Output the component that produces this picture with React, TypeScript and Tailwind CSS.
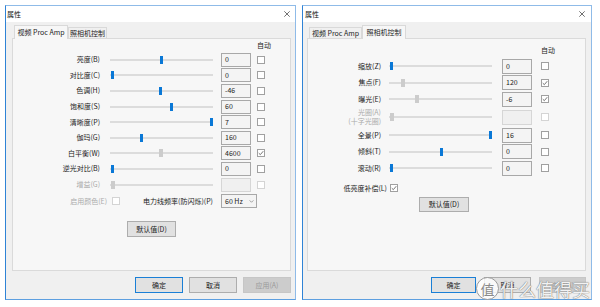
import React from "react";

type Row = {
  label: string;
  sub?: string;
  pos: number;
  value: string;
  auto?: boolean;
  grayThumb?: boolean;
  disabled?: boolean;
  h?: string;
};

const videoRows: Row[] = [
  { label: "亮度(B)", pos: 51, value: "0" },
  { label: "对比度(C)", pos: 2, value: "0" },
  { label: "色调(H)", pos: 50, value: "-46" },
  { label: "饱和度(S)", pos: 61, value: "60" },
  { label: "清晰度(P)", pos: 101, value: "7" },
  { label: "伽玛(G)", pos: 31, value: "160" },
  { label: "白平衡(W)", pos: 50, value: "4600", auto: true, grayThumb: true },
  { label: "逆光对比(B)", pos: 2, value: "0" },
  { label: "增益(G)", pos: 2, value: "", grayThumb: true, disabled: true },
];

const cameraRows: Row[] = [
  { label: "缩放(Z)", pos: 2, value: "0" },
  { label: "焦点(F)", pos: 13, value: "120", auto: true, grayThumb: true },
  { label: "曝光(E)", pos: 27, value: "-6", auto: true, grayThumb: true },
  { label: "光圈(A)", sub: "(十字光圈)", pos: 2, value: "", grayThumb: true, disabled: true },
  { label: "全景(P)", pos: 101, value: "16" },
  { label: "倾斜(T)", pos: 52, value: "0" },
  { label: "滚动(R)", pos: 2, value: "0" },
];

function Slider({ pos, gray }: { pos: number; gray?: boolean }) {
  return (
    <div className="relative w-[103px] h-full flex items-center shrink-0">
      <div className="w-full h-[2px] bg-[#dcdcdc]" />
      <div
        className={
          gray
            ? "absolute top-1/2 -translate-y-1/2 w-[4px] h-[8px] bg-[#cccccc]"
            : "absolute top-1/2 -translate-y-1/2 w-[3px] h-[8px] bg-[#0a78d6]"
        }
        style={{ left: pos - 1.5 }}
      />
    </div>
  );
}

function Check({ checked, disabled }: { checked?: boolean; disabled?: boolean }) {
  return (
    <div
      className={`w-[8px] h-[8px] shrink-0 border bg-white flex items-center justify-center ${
        disabled ? "border-[#d4d4d4]" : "border-[#a0a0a0]"
      }`}
    >
      {checked && (
        <svg viewBox="0 0 8 8" className="w-[6px] h-[6px]">
          <path d="M1 4.2 L3.1 6.2 L7 1.6" stroke="#333" strokeWidth="0.9" fill="none" />
        </svg>
      )}
    </div>
  );
}

function Input({ value, disabled, h }: { value: string; disabled?: boolean; h: string }) {
  return (
    <div
      className={`w-[30px] ${h} shrink-0 border flex items-center pl-[3px] text-[7px] leading-none text-[#222] ${
        disabled ? "border-[#d6d6d6] bg-[#f0f0f0]" : "border-[#a8a8a8] bg-[#f4f4f4]"
      }`}
    >
      {value}
    </div>
  );
}

function Btn({
  children,
  kind = "normal",
  w,
}: {
  children: React.ReactNode;
  kind?: "normal" | "default" | "disabled";
  w: string;
}) {
  const cls =
    kind === "default"
      ? "border-[#1a7fd6] bg-[#e1e1e1] text-[#222]"
      : kind === "disabled"
      ? "border-[#c6c6c6] bg-[#cccccc] text-[#9a9a9a]"
      : "border-[#adadad] bg-[#e1e1e1] text-[#222]";
  return (
    <div className={`${w} h-full border flex items-center justify-center text-[7px] leading-none ${cls}`}>
      {children}
    </div>
  );
}

function TitleBar({ pl, pr }: { pl: string; pr: string }) {
  return (
    <div className={`h-[16px] bg-white flex items-center justify-between ${pl} ${pr}`}>
      <span className="text-[7px] leading-none text-[#111]">属性</span>
      <svg viewBox="0 0 6 6" className="w-[6px] h-[6px]">
        <path d="M0.3 0.3 L5.7 5.7 M5.7 0.3 L0.3 5.7" stroke="#333" strokeWidth="0.7" />
      </svg>
    </div>
  );
}

function Tabs({ active, ml, w1, w2 }: { active: 0 | 1; ml: string; w1: string; w2: string }) {
  const tab = (label: string, i: number, w: string) =>
    active === i ? (
      <div
        key={i}
        className={`${w} h-[14px] -mb-px relative z-10 border border-b-0 border-[#d9d9d9] bg-[#f7f7f7] flex items-center justify-center text-[7px] leading-none text-[#222]`}
      >
        {label}
      </div>
    ) : (
      <div
        key={i}
        className={`${w} h-[11px] border border-b-0 border-[#d9d9d9] bg-[#f0f0f0] flex items-center justify-center text-[7px] leading-none text-[#222]`}
      >
        {label}
      </div>
    );
  return (
    <div className={`h-[13px] flex items-end ${ml}`}>
      {tab("视频 Proc Amp", 0, w1)}
      {tab("照相机控制", 1, w2)}
    </div>
  );
}

function VideoPanel() {
  return (
    <div className="w-[279px] h-[233px] border border-[#dadada] bg-[#f7f7f7] flex flex-col">
      <div className="h-[13px] flex items-center pl-[244px] text-[7px] leading-none text-[#222]">自动</div>
      {videoRows.map((r) => (
        <div key={r.label} className="h-[15.6px] flex items-center">
          <div
            className={`w-[87px] text-right text-[7px] leading-none ${
              r.disabled ? "text-[#ababab]" : "text-[#222]"
            }`}
          >
            {r.label}
          </div>
          <div className="ml-[10px] h-full">
            <Slider pos={r.pos} gray={r.grayThumb} />
          </div>
          <div className="ml-[8px]">
            <Input value={r.value} disabled={r.disabled} h="h-[14px]" />
          </div>
          <div className="ml-[6px]">
            <Check checked={r.auto} disabled={r.disabled} />
          </div>
        </div>
      ))}
      <div className="h-[18px] flex items-center">
        <div className="w-[94px] text-right text-[7px] leading-none text-[#ababab]">启用颜色(E)</div>
        <div className="ml-[5px]">
          <Check disabled />
        </div>
        <div className="w-[93px] text-right text-[7px] leading-none text-[#222]">电力线频率(防闪烁)(P)</div>
        <div className="ml-[8px] w-[36px] h-[14px] border border-[#a8a8a8] bg-[#f4f4f4] flex items-center justify-between pl-[3px] pr-[2px] text-[7px] leading-none text-[#222]">
          <span>60 Hz</span>
          <svg viewBox="0 0 6 4" className="w-[5px] h-[3px]">
            <path d="M0.5 0.5 L3 3 L5.5 0.5" stroke="#555" strokeWidth="0.7" fill="none" />
          </svg>
        </div>
      </div>
      <div className="mt-[11px] ml-[114px] h-[16px] flex">
        <Btn w="w-[49px]">默认值(D)</Btn>
      </div>
    </div>
  );
}

function CameraPanel() {
  return (
    <div className="w-[279px] h-[233px] border border-[#dadada] bg-[#f7f7f7] flex flex-col">
      <div className="h-[19px] pt-[3px] flex items-center pl-[233px] text-[7px] leading-none text-[#222]">自动</div>
      {cameraRows.map((r) => (
        <div key={r.label} className={`${r.sub ? "h-[19.5px]" : "h-[16.5px]"} flex items-center`}>
          <div
            className={`w-[73px] flex flex-col items-end gap-[2px] text-[7px] leading-none ${
              r.disabled ? "text-[#ababab]" : "text-[#222]"
            }`}
          >
            <span>{r.label}</span>
            {r.sub && <span>{r.sub}</span>}
          </div>
          <div className="ml-[8px] h-[16.5px]">
            <Slider pos={r.pos} gray={r.grayThumb} />
          </div>
          <div className="ml-[10px]">
            <Input value={r.value} disabled={r.disabled} h="h-[15px]" />
          </div>
          <div className="ml-[9px]">
            <Check checked={r.auto} disabled={r.disabled} />
          </div>
        </div>
      ))}
      <div className="mt-[4px] h-[15px] flex items-center">
        <div className="w-[79px] text-right text-[7px] leading-none text-[#222]">低亮度补偿(L)</div>
        <div className="ml-[3px]">
          <Check checked />
        </div>
      </div>
      <div className="mt-[1px] ml-[111px] h-[15px] flex">
        <Btn w="w-[50px]">默认值(D)</Btn>
      </div>
    </div>
  );
}

export default function App() {
  return (
    <div className="w-[600px] h-[307px] bg-white flex items-start pt-[5px] pl-[5px] font-['Noto_Sans_CJK_SC',sans-serif]">
      {/* 视频 Proc Amp */}
      <div className="w-[291px] h-[295px] border border-[#8fbbe8] border-l-[#2f83d6] border-b-[#5d9fe0] bg-[#f0f0f0] flex flex-col">
        <TitleBar pl="pl-[1px]" pr="pr-[5px]" />
        <div className="pl-[6px] pt-[3px]">
          <Tabs active={0} ml="ml-[2px]" w1="w-[54px]" w2="w-[39px]" />
          <VideoPanel />
          <div className="mt-[6px] h-[16px] flex gap-[6px] pl-[123px]">
            <Btn kind="default" w="w-[48px]">确定</Btn>
            <Btn w="w-[48px]">取消</Btn>
            <Btn kind="disabled" w="w-[48px]">应用(A)</Btn>
          </div>
        </div>
      </div>

      {/* 照相机控制 */}
      <div className="ml-[6px] w-[290px] h-[295px] border border-[#8fbbe8] border-l-[#2f83d6] border-b-[#5d9fe0] bg-[#f0f0f0] flex flex-col relative">
        <TitleBar pl="pl-[2px]" pr="pr-[6px]" />
        <div className="pl-[4px] pt-[3px]">
          <Tabs active={1} ml="ml-[2px]" w1="w-[53px]" w2="w-[44px]" />
          <CameraPanel />
          <div className="mt-[6px] h-[16px] flex gap-[8px] pl-[124px]">
            <Btn kind="default" w="w-[45px]">确定</Btn>
            <Btn w="w-[47px]">取消</Btn>
            <Btn kind="disabled" w="w-[47px]">应用(A)</Btn>
          </div>
        </div>

        {/* 水印 */}
        <div className="absolute left-[173px] top-[271px] flex items-center gap-[1px] pointer-events-none">
          <div className="w-[23px] h-[23px] rounded-full bg-white/80 border border-[#9a9a9a] flex items-center justify-center text-[14px] leading-none text-[#8a8a8a]">
            值
          </div>
          <span className="text-[18px] leading-none text-white/90 [text-shadow:0_0_1px_#777,0_0_1px_#777]">什么值得买</span>
        </div>
      </div>
    </div>
  );
}
